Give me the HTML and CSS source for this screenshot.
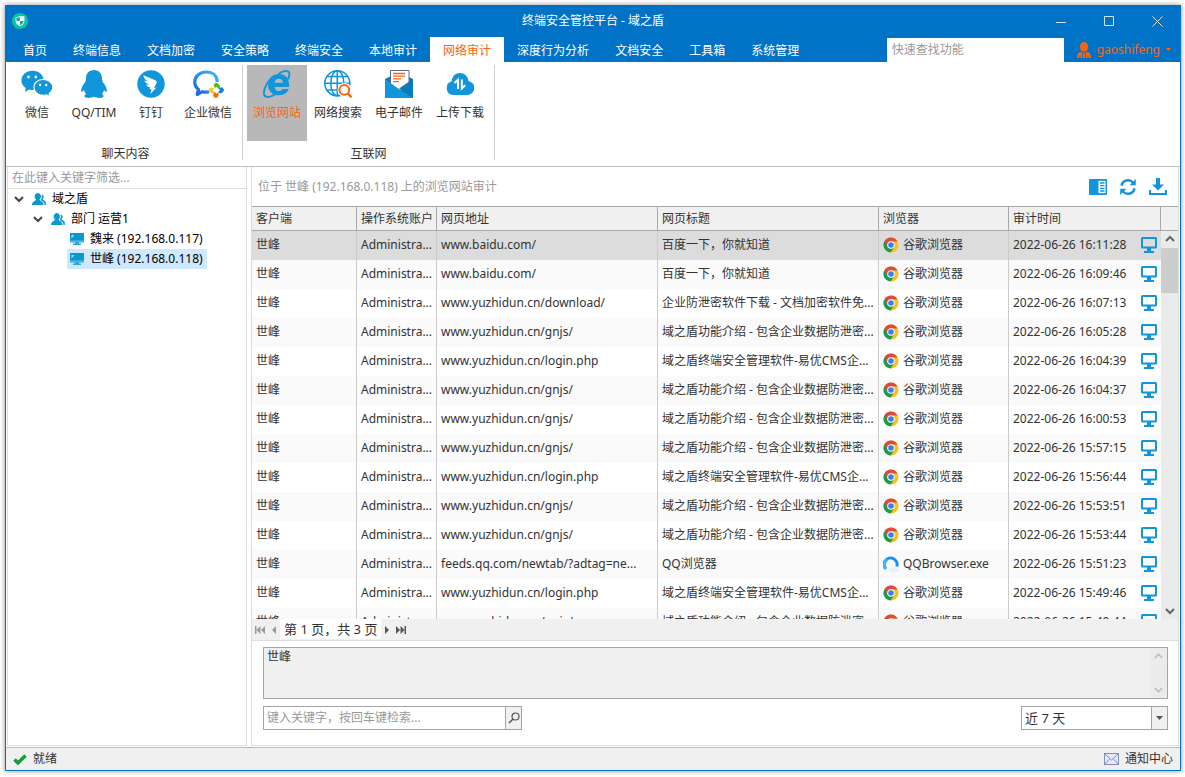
FILE: index.html
```html
<!DOCTYPE html>
<html lang="zh-CN">
<head>
<meta charset="utf-8">
<title>终端安全管控平台 - 域之盾</title>
<link rel="stylesheet" href="styles.css">
</head>
<body>
<svg class="defs" aria-hidden="true">
  <symbol id="chrome" viewBox="0 0 16 16">
    <circle cx="8" cy="8" r="7.500" fill="#fbc116"/>
    <path d="M8 8 1.500 4.200A7.500 7.500 0 0 0 7.600 15.500L11.500 9.800Z" fill="#179c52"/>
    <path d="M8 8 4.500 10 1.500 4.200A7.500 7.500 0 0 1 14.500 4.400H8Z" fill="#dd4b3e"/>
    <circle cx="8" cy="8" r="3.800" fill="#fff"/>
    <circle cx="8" cy="8" r="2.800" fill="#3f7ee8"/>
  </symbol>
  <symbol id="qqb" viewBox="0 0 16 16">
    <path d="M2.900 13A6.500 6.500 0 1 1 13.800 10.500" fill="none" stroke="#1c8df5" stroke-width="3"/>
    <path d="M2.600 12.600A6.500 6.500 0 0 1 4.500 3.300" fill="none" stroke="#37b6fb" stroke-width="3"/>
    <path d="M6 16c-2-3 1-5 3-4 1-2.500 5-2 5 1 2 0 2.500 2 1 3z" fill="#e3f3ff"/>
  </symbol>
  <symbol id="pc" viewBox="0 0 16 16">
    <rect x="1" y="1" width="14" height="9.500" rx=".5" fill="none" stroke="#1296db" stroke-width="2"/>
    <path d="M6 11h4v3h3v2H3v-2h3z" fill="#1296db"/>
  </symbol>
  <symbol id="people" viewBox="0 0 14 12">
    <path d="M9.500 1.500a2.400 2.400 0 0 1 1 4.500c.3.900 3 1.600 3.300 3.600V12h-1.300C12.500 8.500 9.500 8 8.800 7.200 10 5 10 3 9.500 1.500z" fill="#0a99cf"/>
    <path d="M5.800 0a3.400 3.500 0 0 1 1.700 6.400C7.800 8 11.500 8 11.500 12H0C0 8 3.800 8 4.100 6.400A3.400 3.500 0 0 1 5.800 0z" fill="#0a99cf"/>
  </symbol>
  <symbol id="host" viewBox="0 0 14 12">
    <path d="M0 0h14v9H0z" fill="#0a99cf"/>
    <path d="M1.500 5.500V2h3z" fill="#a5dcf0"/>
    <path d="M0 8h14v1.500H9v1h2V12H3v-1.500h2v-1H0z" fill="#2aa8d8"/>
    <path d="M0 8h14" stroke="#8fd0ea" stroke-width=".7"/>
  </symbol>
  <symbol id="down" viewBox="0 0 10 8"><path d="M1 2l4 4 4-4" fill="none" stroke="currentColor" stroke-width="2"/></symbol>
  <symbol id="up" viewBox="0 0 10 8"><path d="M1 6l4-4 4 4" fill="none" stroke="currentColor" stroke-width="2"/></symbol>
</svg>

<div class="window">
  <header class="titlebar">
    <svg class="logo" viewBox="0 0 16 16"><circle cx="8" cy="8" r="8" fill="#0cc4a0"/><path d="M8 3.200h4.400V8c0 2.700-2 4.300-4.400 5.200C5.600 12.300 3.600 10.700 3.600 8V4.200z" fill="#fff"/><path d="M7.800 4v4H4.400V5zM8 8h3.600c0 1.900-1.400 3.300-3.600 4.300z" fill="#0cae95"/></svg>
    <h1 class="title">终端安全管控平台 - 域之盾</h1>
    <div class="winbtns">
      <button type="button" aria-label="最小化"><svg viewBox="0 0 11 11"><path d="M0 6.500h10" /></svg></button>
      <button type="button" aria-label="最大化"><svg viewBox="0 0 11 11"><path d="M.5.5h9v9h-9z"/></svg></button>
      <button type="button" aria-label="关闭"><svg viewBox="0 0 11 11"><path d="M.5.5l10 10M10.500.5l-10 10"/></svg></button>
    </div>
  </header>

  <div class="menubar">
    <nav class="tabs">
      <a href="#">首页</a><a href="#">终端信息</a><a href="#">文档加密</a><a href="#">安全策略</a><a href="#">终端安全</a><a href="#">本地审计</a><a href="#" class="active">网络审计</a><a href="#">深度行为分析</a><a href="#">文档安全</a><a href="#">工具箱</a><a href="#">系统管理</a>
    </nav>
    <input class="quick" type="text" placeholder="快速查找功能" aria-label="快速查找功能">
    <button type="button" class="user">
      <svg class="usericon" viewBox="0 0 14 16"><path d="M7 0c5 0 5 8 1.800 9.500H5.200C2 8 2 0 7 0z" fill="#f8640c"/><path d="M0 16c0-4 1.300-5.700 4.300-6L7 11l2.700-1c3 .3 4.300 2 4.300 6z" fill="#f8640c"/><path d="M5.500 10.500v5.500M8.500 10.500v5.500M3 13.500V16M11 13.500V16" stroke="#0173c7" stroke-width=".8"/></svg>
      gaoshifeng
      <svg class="caret" viewBox="0 0 5 3"><path d="M0 0h5L2.500 3z" fill="#f8640c"/></svg>
    </button>
  </div>

  <div class="ribbon">
    <section class="group chat">
      <div class="tools">
        <button type="button" class="tool"><svg class="wide" viewBox="0 0 32 28"><path d="M11.500.8C17.800.8 22.600 5 22.600 10.300S17.800 20 11.500 20c-1.200 0-2.300-.1-3.400-.5L4 22l.7-3.900C2 16.300.4 13.500.4 10.300.4 5 5.400.8 11.500.8z" fill="#1296db"/><path d="M22.200 9.500c5.300 0 9.600 3.500 9.600 7.800 0 2.700-1.500 4.800-3.600 6.300l1 3.300-3.600-2.100c-1.100.4-2.200.6-3.400.6-5.300 0-9.300-3.600-9.300-8.100s4-7.800 9.300-7.800z" fill="#1296db" stroke="#fff" stroke-width="1.200"/><g fill="#fff"><circle cx="7.500" cy="7" r="1.400"/><circle cx="14.800" cy="7" r="1.400"/><circle cx="19" cy="15" r="1.200"/><circle cx="25.200" cy="15" r="1.200"/></g></svg><span>微信</span></button>
        <button type="button" class="tool"><svg viewBox="0 0 28 28"><path d="M14 0C9 0 6 3.500 6 8.500c0 1.500-.5 2-.7 3.500C2.500 15 .8 19 1.200 21.500c.4 1 1.800 0 2.800-1.500.4 1.800 1.200 3 2.200 4C4.500 25 4 26 4.800 27c1.700 1.400 6.700 1 9.200-.3 2.500 1.300 7.500 1.700 9.200.3.800-1 .3-2-1.400-3 1-1 1.800-2.200 2.200-4 1 1.500 2.400 2.500 2.800 1.500.4-2.500-1.300-6.500-4.100-9.500-.2-1.500-.7-2-.7-3.500C22 3.500 19 0 14 0z" fill="#1296db"/></svg><span>QQ/TIM</span></button>
        <button type="button" class="tool"><svg viewBox="0 0 28 28"><circle cx="14" cy="14" r="13.700" fill="#1296db"/><path d="M6.500 5.300l12.300 5.200c1.200.6 1.100 2.200.5 3.300l-2.300 3.900h2.200l-5.900 6.300 1.300-4.800h-2.200l.8-2c-2 0-3.500-1-4-2.400l3.200-.3c-2.700-.7-4.300-2-4.900-3.700l3 .3C7.800 9.300 6.300 7.500 6.500 5.300z" fill="#fff"/></svg><span>钉钉</span></button>
        <button type="button" class="tool"><svg class="wide" viewBox="0 0 32 28"><defs><linearGradient id="wx" x1="0" y1="1" x2="1" y2="0"><stop offset="0" stop-color="#1a60e0"/><stop offset="1" stop-color="#39baff"/></linearGradient></defs><path d="M25.300 12C25 5.500 20.500 2 14.500 2 8 2 2.800 6.200 2.800 12c0 3.500 1.700 6 3.800 7.500L5.200 24.500l5-2.800c2.300.7 4.500.7 6.800 0" fill="none" stroke="url(#wx)" stroke-width="3.200" stroke-linejoin="round"/><g stroke-width="5" stroke-linecap="round"><path d="M24.300 15.300l1.300 1.500" stroke="#55b91c"/><path d="M28.300 20.800l1-.8" stroke="#0a85ee"/><path d="M23.800 25.300l.3-1.500" stroke="#fb6500"/><path d="M19.300 20.200l1.500.4" stroke="#fcc62c"/></g><path d="M24.500 16.800l3.500 3.500-3.500 3.500-3.500-3.500z" fill="#fff"/></svg><span>企业微信</span></button>
      </div>
      <h2>聊天内容</h2>
    </section>
    <section class="group net">
      <div class="tools">
        <button type="button" class="tool selected"><svg viewBox="0 0 28 28"><path fill-rule="evenodd" d="M26.200 17H11.600c.3 2.600 1.800 4 4.200 4 1.800 0 3-.7 3.700-1.900h6.200C24.300 23 20.800 25.300 16 25.300 9.500 25.300 5 21 5 14.700 5 8.300 9.500 4 15.800 4c6.800 0 10.800 4.600 10.400 13zM11.700 12.800h8.200c-.2-2.500-1.600-4-4-4s-3.900 1.500-4.200 4z" fill="#1296db"/><path d="M15.500 4C20 .6 25.600-.2 26.300 3c.4 2-.5 4.500-1.500 6.500M6.500 10C2 15.500-.6 23.500 2 26c2 2 6.500.5 10.500-2" fill="none" stroke="#1296db" stroke-width="1.900"/></svg><span>浏览网站</span></button>
        <button type="button" class="tool"><svg viewBox="0 0 28 28"><g fill="none" stroke="#1296db" stroke-width="1.600"><circle cx="13.300" cy="13.300" r="12.500"/><ellipse cx="13.300" cy="13.300" rx="6.500" ry="12.500"/><path d="M13.300.8v25M.8 13.300h25M3 6.500h20.600M3 20h20.600"/></g><circle cx="20.500" cy="20" r="7" fill="#fff"/><path d="M23 22l5 5v1h-5z" fill="#fff"/><circle cx="20.300" cy="19.800" r="4.900" fill="none" stroke="#f8640c" stroke-width="2"/><path d="M23.800 23.500l3.700 3.800" stroke="#f8640c" stroke-width="2.400"/></svg><span>网络搜索</span></button>
        <button type="button" class="tool"><svg viewBox="0 0 28 28"><path d="M0 9l5-2.500h18L28 9v19H0z" fill="#0d7ab8"/><path d="M5.500.5h18.500v15L14.500 21l-9-5.500z" fill="#fff" stroke="#5c6b8a"/><path d="M28 9v19L14 18.500z" fill="#0d7ab8"/><path d="M0 9l13.500 9.700L28 28H0z" fill="#1296db"/><path d="M8 3.500h12M8 6.200h12M8 8.900h8M8 11.600h6" stroke="#f8640c" stroke-width="1.300"/></svg><span>电子邮件</span></button>
        <button type="button" class="tool"><svg viewBox="0 0 28 28"><path d="M7 25a7 7 0 0 1-1.200-13.700C5.800 6.500 9.500 3 14 3s8 3.300 8.400 7.900A7.100 7.100 0 0 1 21 25z" fill="#1296db"/><path d="M8.500 13l3.500-3.300V19M15.800 9.500v9l3.500-3.200" fill="none" stroke="#fff" stroke-width="2"/></svg><span>上传下载</span></button>
      </div>
      <h2>互联网</h2>
    </section>
  </div>

  <main class="main">
    <aside class="side">
      <input class="filter" type="text" placeholder="在此键入关键字筛选..." aria-label="筛选">
      <ul class="tree">
        <li><div class="node"><svg class="chev"><use href="#down"/></svg><svg class="ticon"><use href="#people"/></svg><span>域之盾</span></div>
          <ul>
            <li><div class="node"><svg class="chev"><use href="#down"/></svg><svg class="ticon"><use href="#people"/></svg><span>部门 运营1</span></div>
              <ul>
                <li><div class="node leaf"><svg class="ticon"><use href="#host"/></svg><span>魏来 (192.168.0.117)</span></div></li>
                <li><div class="node leaf current"><svg class="ticon"><use href="#host"/></svg><span>世峰 (192.168.0.118)</span></div></li>
              </ul>
            </li>
          </ul>
        </li>
      </ul>
    </aside>

    <section class="content">
      <div class="bar">
        <p>位于 世峰 (192.168.0.118) 上的浏览网站审计</p>
        <div class="actions">
          <button type="button" aria-label="列"><svg viewBox="0 0 18 18"><path d="M1 1h16a1 1 0 0 1 1 1v14a1 1 0 0 1-1 1H1a1 1 0 0 1-1-1V2a1 1 0 0 1 1-1z" fill="#1296db"/><path d="M9.500 2.800h7v12.400h-7z" fill="#fff"/><path d="M11 5h4.500M11 7.700h4.500M11 10.400h4.500M11 13h4.500" stroke="#1296db" stroke-width="1.300"/></svg></button>
          <button type="button" aria-label="刷新"><svg viewBox="0 0 18 18"><path d="M2.500 7.800A6.600 6.600 0 0 1 14 4.500M15.500 10.200A6.600 6.600 0 0 1 4 13.500" fill="none" stroke="#1296db" stroke-width="2.500"/><path d="M16.800 1v6.300h-6.300zM1.200 17v-6.300h6.300z" fill="#1296db"/></svg></button>
          <button type="button" aria-label="导出"><svg viewBox="0 0 18 18"><path d="M7 0h4v6.500h4L9 12.500 3 6.500h4z" fill="#1296db"/><path d="M1 12v4h16v-4" fill="none" stroke="#1296db" stroke-width="2.200"/></svg></button>
        </div>
      </div>

      <div class="gridwrap">
        <table class="grid">
          <colgroup><col class="c1"><col class="c2"><col class="c3"><col><col class="c5"><col class="c6"><col class="c7"></colgroup>
          <thead><tr><th>客户端</th><th>操作系统账户</th><th>网页地址</th><th>网页标题</th><th>浏览器</th><th>审计时间</th><th></th></tr></thead>
          <tbody>
            <tr class="sel"><td>世峰</td><td>Administra...</td><td>www.baidu.com/</td><td>百度一下，你就知道</td><td><div class="cell"><svg class="br"><use href="#chrome"/></svg>谷歌浏览器</div></td><td><div class="cell time">2022-06-26 16:11:28<svg class="pc"><use href="#pc"/></svg></div></td><td></td></tr>
            <tr><td>世峰</td><td>Administra...</td><td>www.baidu.com/</td><td>百度一下，你就知道</td><td><div class="cell"><svg class="br"><use href="#chrome"/></svg>谷歌浏览器</div></td><td><div class="cell time">2022-06-26 16:09:46<svg class="pc"><use href="#pc"/></svg></div></td><td></td></tr>
            <tr><td>世峰</td><td>Administra...</td><td>www.yuzhidun.cn/download/</td><td>企业防泄密软件下载 - 文档加密软件免...</td><td><div class="cell"><svg class="br"><use href="#chrome"/></svg>谷歌浏览器</div></td><td><div class="cell time">2022-06-26 16:07:13<svg class="pc"><use href="#pc"/></svg></div></td><td></td></tr>
            <tr><td>世峰</td><td>Administra...</td><td>www.yuzhidun.cn/gnjs/</td><td>域之盾功能介绍 - 包含企业数据防泄密...</td><td><div class="cell"><svg class="br"><use href="#chrome"/></svg>谷歌浏览器</div></td><td><div class="cell time">2022-06-26 16:05:28<svg class="pc"><use href="#pc"/></svg></div></td><td></td></tr>
            <tr><td>世峰</td><td>Administra...</td><td>www.yuzhidun.cn/login.php</td><td>域之盾终端安全管理软件-易优CMS企...</td><td><div class="cell"><svg class="br"><use href="#chrome"/></svg>谷歌浏览器</div></td><td><div class="cell time">2022-06-26 16:04:39<svg class="pc"><use href="#pc"/></svg></div></td><td></td></tr>
            <tr><td>世峰</td><td>Administra...</td><td>www.yuzhidun.cn/gnjs/</td><td>域之盾功能介绍 - 包含企业数据防泄密...</td><td><div class="cell"><svg class="br"><use href="#chrome"/></svg>谷歌浏览器</div></td><td><div class="cell time">2022-06-26 16:04:37<svg class="pc"><use href="#pc"/></svg></div></td><td></td></tr>
            <tr><td>世峰</td><td>Administra...</td><td>www.yuzhidun.cn/gnjs/</td><td>域之盾功能介绍 - 包含企业数据防泄密...</td><td><div class="cell"><svg class="br"><use href="#chrome"/></svg>谷歌浏览器</div></td><td><div class="cell time">2022-06-26 16:00:53<svg class="pc"><use href="#pc"/></svg></div></td><td></td></tr>
            <tr><td>世峰</td><td>Administra...</td><td>www.yuzhidun.cn/gnjs/</td><td>域之盾功能介绍 - 包含企业数据防泄密...</td><td><div class="cell"><svg class="br"><use href="#chrome"/></svg>谷歌浏览器</div></td><td><div class="cell time">2022-06-26 15:57:15<svg class="pc"><use href="#pc"/></svg></div></td><td></td></tr>
            <tr><td>世峰</td><td>Administra...</td><td>www.yuzhidun.cn/login.php</td><td>域之盾终端安全管理软件-易优CMS企...</td><td><div class="cell"><svg class="br"><use href="#chrome"/></svg>谷歌浏览器</div></td><td><div class="cell time">2022-06-26 15:56:44<svg class="pc"><use href="#pc"/></svg></div></td><td></td></tr>
            <tr><td>世峰</td><td>Administra...</td><td>www.yuzhidun.cn/gnjs/</td><td>域之盾功能介绍 - 包含企业数据防泄密...</td><td><div class="cell"><svg class="br"><use href="#chrome"/></svg>谷歌浏览器</div></td><td><div class="cell time">2022-06-26 15:53:51<svg class="pc"><use href="#pc"/></svg></div></td><td></td></tr>
            <tr><td>世峰</td><td>Administra...</td><td>www.yuzhidun.cn/gnjs/</td><td>域之盾功能介绍 - 包含企业数据防泄密...</td><td><div class="cell"><svg class="br"><use href="#chrome"/></svg>谷歌浏览器</div></td><td><div class="cell time">2022-06-26 15:53:44<svg class="pc"><use href="#pc"/></svg></div></td><td></td></tr>
            <tr><td>世峰</td><td>Administra...</td><td>feeds.qq.com/newtab/?adtag=ne...</td><td>QQ浏览器</td><td><div class="cell"><svg class="br"><use href="#qqb"/></svg>QQBrowser.exe</div></td><td><div class="cell time">2022-06-26 15:51:23<svg class="pc"><use href="#pc"/></svg></div></td><td></td></tr>
            <tr><td>世峰</td><td>Administra...</td><td>www.yuzhidun.cn/login.php</td><td>域之盾终端安全管理软件-易优CMS企...</td><td><div class="cell"><svg class="br"><use href="#chrome"/></svg>谷歌浏览器</div></td><td><div class="cell time">2022-06-26 15:49:46<svg class="pc"><use href="#pc"/></svg></div></td><td></td></tr>
            <tr><td>世峰</td><td>Administra...</td><td>www.yuzhidun.cn/gnjs/</td><td>域之盾功能介绍 - 包含企业数据防泄密...</td><td><div class="cell"><svg class="br"><use href="#chrome"/></svg>谷歌浏览器</div></td><td><div class="cell time">2022-06-26 15:49:44<svg class="pc"><use href="#pc"/></svg></div></td><td></td></tr>
          </tbody>
        </table>
        <div class="scroll"><svg><use href="#up"/></svg><div class="thumb"></div><svg><use href="#down"/></svg></div>
      </div>

      <div class="pager">
        <button type="button" class="off" aria-label="首页"><svg viewBox="0 0 10 8"><path d="M0 0h1.500v8H0zM5.500 0v8l-4-4zM10 0v8L6 4z"/></svg></button>
        <button type="button" class="off" aria-label="上一页"><svg viewBox="0 0 10 8"><path d="M7 0v8L3 4z"/></svg></button>
        <span>第 1 页，共 3 页</span>
        <button type="button" aria-label="下一页"><svg viewBox="0 0 10 8"><path d="M3 0v8l4-4z"/></svg></button>
        <button type="button" aria-label="末页"><svg viewBox="0 0 10 8"><path d="M8.500 0H10v8H8.500zM0 0v8l4-4zM4.500 0v8l4-4z"/></svg></button>
      </div>

      <div class="detail">
        <div class="memo"><textarea readonly aria-label="详情">世峰</textarea><div class="memoscroll"><svg><use href="#up"/></svg><svg><use href="#down"/></svg></div></div>
        <div class="filters">
          <div class="box searchbox"><input type="text" placeholder="键入关键字，按回车键检索..." aria-label="检索"><button type="button" aria-label="搜索"><svg viewBox="0 0 12 12"><circle cx="7.500" cy="4.500" r="3.500" fill="none" stroke="#555" stroke-width="1.200"/><path d="M5 7L1 11" stroke="#555" stroke-width="1.600"/></svg></button></div>
          <div class="box period"><select aria-label="时间范围"><option>近 7 天</option></select><span class="drop"><svg viewBox="0 0 7 4"><path d="M0 0h7L3.500 4z" fill="#555"/></svg></span></div>
        </div>
      </div>
    </section>
  </main>

  <footer class="status">
    <span class="ready"><svg viewBox="0 0 14 11"><path d="M1.500 5.500L5 9l7.500-7.500" fill="none" stroke="#139b3c" stroke-width="3.400"/></svg>就绪</span>
    <button type="button" class="notice"><svg viewBox="0 0 15 12"><rect x=".5" y=".5" width="14" height="11" fill="#e6ebf8" stroke="#7f8dbd"/><path d="M1 1l6.500 6L14 1M1 11l4.500-5M14 11L9.500 6" fill="none" stroke="#7f8dbd"/></svg>通知中心</button>
  </footer>
</div>
</body>
</html>
```

FILE: styles.css
```css
* { box-sizing: border-box; }

body {
  margin: 0;
  padding: 5px 4px 6px 5px;
  height: 100vh;
  background: #fff;
  color: #333;
  font: 12px/16px "Noto Sans", "Noto Sans CJK SC", sans-serif;
}

button, input, select, textarea {
  margin: 0;
  padding: 0;
  border: 0;
  border-radius: 0;
  background: none;
  color: inherit;
  font: inherit;
  outline: 0;
}

svg { display: block; flex: none; }
h1, h2, p, ul { margin: 0; padding: 0; font-size: 12px; font-weight: normal; }
ul { list-style: none; }
a { color: inherit; text-decoration: none; }
.defs { position: absolute; width: 0; height: 0; }

.window {
  display: flex;
  flex-direction: column;
  height: 100%;
  border: 1px solid #0173c7;
  border-top: 0;
  background: #fff;
  box-shadow: 0 0 5px rgba(0, 0, 0, .45);
}

/* Title bar and menu */
.titlebar {
  display: grid;
  grid-template-columns: 1fr auto 1fr;
  align-items: center;
  height: 32px;
  padding: 0 6px;
  background: #0173c7;
  color: #fff;
}
.logo { width: 16px; height: 16px; }
.winbtns { display: flex; justify-content: flex-end; gap: 37px; padding-right: 11px; }
.winbtns svg { width: 11px; height: 11px; fill: none; stroke: #d5e4f2; }

.menubar {
  display: flex;
  height: 25px;
  padding: 0 9px 0 4px;
  background: #0173c7;
  color: #fff;
}
.tabs { display: flex; flex: 1; }
.tabs a { padding: 6px 13px 3px; white-space: nowrap; }
.tabs .active { background: #fff; color: #f8640c; }
.quick {
  width: 177px;
  margin-top: 1px;
  padding: 0 5px;
  background: #fff;
  color: #333;
}
::placeholder { color: #999; opacity: 1; }
.user {
  display: flex;
  align-items: center;
  gap: 6px;
  margin-left: 13px;
  color: #f8640c;
}
.usericon { width: 14px; height: 16px; }
.caret { width: 5px; height: 3px; }

/* Ribbon */
.ribbon {
  display: flex;
  height: 105px;
  padding: 3px 0 6px;
  border-bottom: 1px solid #c0c0c0;
}
.group {
  display: flex;
  flex-direction: column;
  border-right: 1px solid #d0d0d0;
}
.group h2 { padding-top: 5px; text-align: center; }
.chat { padding-left: 3px; }
.chat .tools { padding-right: 6px; }
.net { padding: 0 4px; }
.tools { display: flex; gap: 1px; }
.tool {
  display: flex;
  flex-direction: column;
  align-items: center;
  gap: 7px;
  width: 60px;
  height: 76px;
  padding-top: 5px;
}
.chat .tool { width: 56px; }
.tool svg { width: 28px; height: 28px; }
.tool .wide { width: 32px; }
.selected { background: #b8b8b8; color: #f8640c; }

/* Main */
.main { display: flex; flex: 1; min-height: 0; gap: 4px; padding: 0 1px; }
.side { width: 240px; border: 1px solid #ddd; border-top: 0; margin-bottom: 1px; }
.filter {
  display: block;
  width: 100%;
  height: 22px;
  padding: 0 4px;
  border-bottom: 1px solid #ddd;
}
.node {
  display: flex;
  align-items: center;
  gap: 6px;
  width: max-content;
  height: 20px;
  margin-left: 3px;
  padding: 0 4px 0 3px;
  color: #000;
}
.tree ul .node { margin-left: 22px; }
.tree ul ul .node { margin-left: 59px; }
.chev { width: 10px; height: 8px; margin-right: 2px; color: #444; }
.ticon { width: 14px; height: 12px; }
.current { background: #cde8ff; }

.content {
  display: flex;
  flex-direction: column;
  flex: 1;
  min-width: 0;
  margin-bottom: 1px;
  border: 1px solid #ddd;
  border-top: 0;
}
.bar {
  display: flex;
  align-items: center;
  justify-content: space-between;
  height: 39px;
  padding: 0 11px 0 6px;
  color: #999;
}
.actions { display: flex; gap: 12px; }
.actions svg { width: 18px; height: 18px; }

.gridwrap { position: relative; flex: 1; min-height: 0; overflow: hidden; }
.grid {
  width: 100%;
  border-collapse: separate;
  border-spacing: 0;
  table-layout: fixed;
}
.c1 { width: 105px; }
.c2 { width: 80px; }
.c3 { width: 221px; }
.c5 { width: 130px; }
.c6 { width: 152px; }
.c7 { width: 17px; }
.grid th {
  height: 25px;
  padding: 0 4px;
  border: solid #a8a8a8;
  border-width: 1px 1px 1px 0;
  background: #f0f0f0;
  font-weight: normal;
  text-align: left;
  white-space: nowrap;
}
.grid td {
  height: 29px;
  padding: 0 0 2px 4px;
  border-right: 1px solid #ccc;
  overflow: hidden;
  white-space: nowrap;
}
.grid th:last-child, .grid td:nth-child(n+6) { border-right: 0; }
.grid tbody tr:nth-child(even) { background: #fafafa; }
.grid .sel { background: #dcdcdc; }
.cell { display: flex; align-items: center; gap: 4px; }
.time { justify-content: space-between; padding-right: 4px; }
.br, .pc { width: 16px; height: 16px; }

.scroll {
  position: absolute;
  top: 25px;
  right: 0;
  bottom: 0;
  display: flex;
  flex-direction: column;
  align-items: center;
  width: 17px;
  padding: 4px 0;
  background: #ebebeb;
  color: #666;
}
.scroll svg { width: 10px; height: 8px; }
.thumb { width: 17px; height: 45px; margin: 5px 0 auto; background: #cdcdcd; }

.pager {
  display: flex;
  height: 22px;
  padding-left: 2px;
  border-bottom: 1px solid #ddd;
  background: #f0f0f0;
}
.pager span { padding: 2px 4px 0; margin-bottom: 1px; background: #fff; font-size: 13px; }
.pager button { width: 12px; }
.pager button + button { margin-left: 2px; }
.pager svg { width: 10px; height: 8px; margin: 0 auto; fill: #555; }
.pager .off svg { fill: #999; }

.detail { padding: 6px 10px 15px 11px; }
.memo {
  display: flex;
  height: 52px;
  border: 1px solid #a5a5a5;
  background: #f0f0f0;
}
.memo textarea { flex: 1; padding: 1px 3px; resize: none; overflow: hidden; }
.memoscroll {
  display: flex;
  flex-direction: column;
  justify-content: space-between;
  align-items: center;
  width: 17px;
  padding: 4px 0;
  background: #ebebeb;
  color: #bfbfbf;
}
.memoscroll svg { width: 9px; height: 8px; }
.filters { display: flex; justify-content: space-between; margin-top: 7px; }
.box { display: flex; height: 24px; border: 1px solid #a5a5a5; background: #fff; }
.searchbox { width: 259px; }
.box input { flex: 1; min-width: 0; padding: 0 3px; }
.box button, .drop {
  display: grid;
  place-items: center;
  width: 16px;
  border-left: 1px solid #a5a5a5;
  background: #f0f0f0;
}
.box button svg { width: 12px; height: 12px; }
.period { width: 147px; }
.period select { flex: 1; padding: 0 3px; appearance: none; font-size: 13px; }
.drop svg { width: 7px; height: 4px; }

.status {
  display: flex;
  justify-content: space-between;
  align-items: center;
  height: 23px;
  padding: 0 7px;
  border-top: 1px solid #bbb;
  background: #f0f0f0;
}
.ready, .notice { display: flex; align-items: center; gap: 6px; }
.ready svg { width: 14px; height: 11px; }
.notice svg { width: 15px; height: 12px; }
```
